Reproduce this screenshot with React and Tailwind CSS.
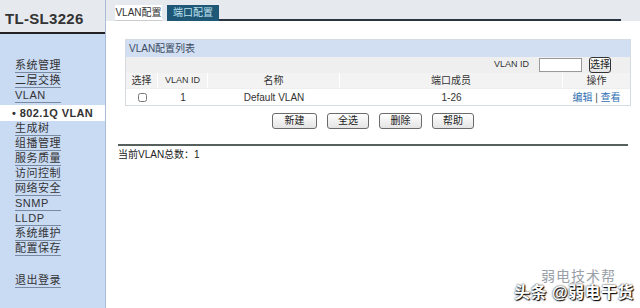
import React from 'react';

const font = { fontFamily: '"Liberation Sans", "Noto Sans CJK SC", sans-serif' };

const menu = ['系统管理', '二层交换', 'VLAN'];
const menu2 = ['生成树', '组播管理', '服务质量', '访问控制', '网络安全', 'SNMP', 'LLDP', '系统维护', '配置保存'];

const Btn = ({ children, className = '' }) => (
  <button className={`h-[16px] rounded-[3px] border border-[#6b6b6b] bg-gradient-to-b from-white to-[#e4e4e4] text-[10px] leading-none text-[#222] ${className}`}>
    {children}
  </button>
);

const MenuItem = ({ label }) => (
  <div className="h-[15px] pl-[15px]">
    <div className="w-[46px] h-[15px] border-b border-[#7b8aa3] text-[11px] leading-[14px] tracking-[0.5px] text-[#333]">{label}</div>
  </div>
);

export default function App() {
  return (
    <div className="relative flex w-[640px] h-[308px] overflow-hidden bg-white" style={font}>
      {/* --- SIDEBAR --- */}
      <aside className="w-[106px] flex flex-col border-r border-[#a9bcd8]">
        <div className="h-[34px] bg-[#e6e9ee] border-b-2 border-[#222] pl-[5px] pt-[8px] text-[15px] font-bold text-[#333] tracking-[0.3px]">
          TL-SL3226
        </div>
        <div className="flex-1 bg-[#c9daf3] pt-[24px]">
          {menu.map(m => <MenuItem key={m} label={m} />)}
          <div className="h-[16px] mt-[2px] bg-white pl-[12px] text-[11px] leading-[16px] font-bold text-[#333] tracking-[0.4px]">• 802.1Q VLAN</div>
          {menu2.map(m => <MenuItem key={m} label={m} />)}
          <div className="mt-[17px]"><MenuItem label="退出登录" /></div>
        </div>
      </aside>

      {/* --- MAIN --- */}
      <main className="flex-1 flex flex-col">
        <div className="h-[21px] bg-[#e6e9ee] flex items-end pl-[9px]">
          <div className="h-[16px] w-[47px] whitespace-nowrap bg-white text-[10px] leading-[16px] text-center text-[#333] border-b border-[#ccc]">VLAN配置</div>
          <div className="h-[16px] w-[52px] ml-[5px] whitespace-nowrap bg-[#1e5876] text-[10px] leading-[16px] text-center text-[#bfe0f0]">端口配置</div>
          <div className="w-[402px] border-b-2 border-[#2a3440]"></div>
        </div>

        <div className="pl-[19px] pr-[9px] pt-[18px]">
          <div className="border border-[#d6dbe2] text-[10px] text-[#333]">
            <div className="h-[17px] bg-[#d2dff2] pl-[3px] leading-[17px] text-[#3a4a60]">VLAN配置列表</div>
            <div className="h-[16px] bg-[#efefef] flex items-center justify-end pr-[19px]">
              <span className="text-[9px] text-[#333] mr-[10px]">VLAN ID</span>
              <input className="w-[43px] h-[14px] bg-white border border-[#999] mr-[7px]" />
              <Btn className="w-[22px] h-[15px] rounded-[2px] border-[#333]">选择</Btn>
            </div>
            <div className="h-[15px] flex bg-[#f3f3f3] text-center leading-[15px]">
              <div className="w-[32px] border-r border-white">选择</div>
              <div className="w-[50px] border-r border-white text-[9px]">VLAN ID</div>
              <div className="w-[132px] border-r border-white">名称</div>
              <div className="w-[223px] border-r border-white">端口成员</div>
              <div className="flex-1">操作</div>
            </div>
            <div className="h-[17px] flex bg-white text-center items-center border-t border-[#eee]">
              <div className="w-[32px] flex justify-center"><input type="checkbox" className="w-[9px] h-[9px]" /></div>
              <div className="w-[50px]">1</div>
              <div className="w-[132px]">Default VLAN</div>
              <div className="w-[223px]">1-26</div>
              <div className="flex-1 text-[#2f6fb0]">编辑 <span className="text-[#555]">|</span> 查看</div>
            </div>
          </div>
        </div>

        <div className="flex justify-center gap-[10px] pt-[7px]">
          <Btn className="w-[45px]">新建</Btn>
          <Btn className="w-[42px]">全选</Btn>
          <Btn className="w-[43px]">删除</Btn>
          <Btn className="w-[42px]">帮助</Btn>
        </div>

        <div className="mx-[12px] mt-[15px] border-t-2 border-[#56605c]"></div>
        <div className="pl-[12px] pt-[1px] text-[10px] text-[#222]">当前VLAN总数：1</div>
      </main>

      {/* watermark overlay */}
      <div className="absolute right-[6px] bottom-[7px] flex flex-col items-end gap-[2px] leading-none">
        <div className="text-[14px] text-[#9aa0a8] mr-[18px] tracking-[1px]">弱电技术帮</div>
        <div className="text-[16px] font-bold text-white tracking-[0.5px] [text-shadow:0_0_2px_#000,1px_1px_1px_#000]">头条 @弱电干货</div>
      </div>
    </div>
  );
}
